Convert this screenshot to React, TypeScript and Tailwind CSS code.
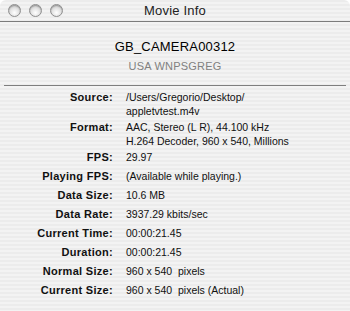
const rows: { label: string; value: string[] }[] = [
  { label: "Source:", value: ["/Users/Gregorio/Desktop/", "appletvtest.m4v"] },
  { label: "Format:", value: ["AAC, Stereo (L R), 44.100 kHz", "H.264 Decoder, 960 x 540, Millions"] },
  { label: "FPS:", value: ["29.97"] },
  { label: "Playing FPS:", value: ["(Available while playing.)"] },
  { label: "Data Size:", value: ["10.6 MB"] },
  { label: "Data Rate:", value: ["3937.29 kbits/sec"] },
  { label: "Current Time:", value: ["00:00:21.45"] },
  { label: "Duration:", value: ["00:00:21.45"] },
  { label: "Normal Size:", value: ["960 x 540  pixels"] },
  { label: "Current Size:", value: ["960 x 540  pixels (Actual)"] },
];

function Light() {
  return (
    <div className="h-[13px] w-[13px] rounded-full border border-[#8e8e8e] bg-[radial-gradient(circle_at_50%_70%,#ffffff_0%,#e4e4e4_45%,#b9b9b9_100%)] shadow-[inset_0_1px_1px_rgba(0,0,0,0.25)]" />
  );
}

export default function App() {
  return (
    <div className="h-[311px] w-[350px] bg-white font-['Liberation_Sans',sans-serif] text-[11px] text-[#111]">
      <div className="h-full w-full overflow-hidden rounded-t-[6px] bg-[repeating-linear-gradient(to_bottom,#ececec_0px,#ececec_2px,#f3f3f3_2px,#f3f3f3_4px)]">
        {/* title bar */}
        <div className="relative flex h-[22px] items-center justify-center border-b border-[#7c7c7c]">
          <div className="absolute left-[8px] top-[4px] flex gap-[8px]">
            <Light />
            <Light />
            <Light />
          </div>
          <span className="text-[13px] tracking-[0.2px] text-[#222]">Movie Info</span>
        </div>

        {/* header */}
        <div className="flex flex-col items-center">
          <div className="mt-[16px] text-[13px] leading-[18px] tracking-[0.2px] text-black">GB_CAMERA00312</div>
          <div className="mt-[3px] text-[11px] leading-[14px] tracking-[0.2px] text-[#808080]">USA WNPSGREG</div>
        </div>

        <div className="mx-[4px] mt-[12px] h-px bg-[#7e7e7e]" />

        {/* details */}
        <div className="mt-[4px] flex flex-col">
          {rows.map((r) => (
            <div
              key={r.label}
              className={`flex leading-[14px] ${r.value.length > 1 ? "h-[30px]" : "h-[19px]"}`}
            >
              <div className="w-[113px] shrink-0 text-right font-bold tracking-[0.3px]">{r.label}</div>
              <div className="ml-[13px] whitespace-pre text-[10.5px]">
                {r.value.map((v) => (
                  <div key={v}>{v}</div>
                ))}
              </div>
            </div>
          ))}
        </div>
      </div>
    </div>
  );
}
